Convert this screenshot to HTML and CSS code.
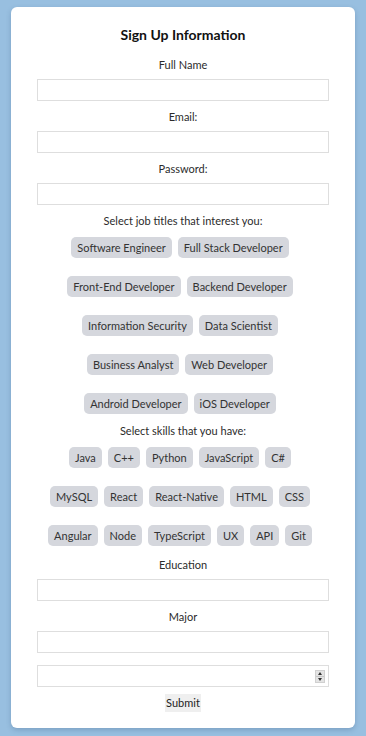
FILE: index.html
```html
<!DOCTYPE html>
<html lang="en">
<head>
    <meta charset="UTF-8">
    <meta name="viewport" content="width=device-width, initial-scale=1.0">
    <title>Sign Up</title>
    <link rel="stylesheet" href="styles.css">
</head>
<body>
    <form class="signup">
        <h1>Sign Up Information</h1>

        <label for="fullName">Full Name</label>
        <input type="text" id="fullName">

        <label for="email">Email:</label>
        <input type="email" id="email">

        <label for="password">Password:</label>
        <input type="password" id="password">

        <p class="group-label">Select job titles that interest you:</p>
        <div class="chips">
            <span class="chip">Software Engineer</span>
            <span class="chip">Full Stack Developer</span>
            <span class="chip">Front-End Developer</span>
            <span class="chip">Backend Developer</span>
            <span class="chip">Information Security</span>
            <span class="chip">Data Scientist</span>
            <span class="chip">Business Analyst</span>
            <span class="chip">Web Developer</span>
            <span class="chip">Android Developer</span>
            <span class="chip">iOS Developer</span>
        </div>

        <p class="group-label">Select skills that you have:</p>
        <div class="chips">
            <span class="chip">Java</span>
            <span class="chip">C++</span>
            <span class="chip">Python</span>
            <span class="chip">JavaScript</span>
            <span class="chip">C#</span>
            <span class="chip">MySQL</span>
            <span class="chip">React</span>
            <span class="chip">React-Native</span>
            <span class="chip">HTML</span>
            <span class="chip">CSS</span>
            <span class="chip">Angular</span>
            <span class="chip">Node</span>
            <span class="chip">TypeScript</span>
            <span class="chip">UX</span>
            <span class="chip">API</span>
            <span class="chip">Git</span>
        </div>

        <label for="education" class="after-chips">Education</label>
        <input type="text" id="education">

        <label for="major">Major</label>
        <input type="text" id="major">

        <div class="number-field">
            <input type="text" id="year">
            <span class="spinner">
                <span class="spin-up"></span>
                <span class="spin-down"></span>
            </span>
        </div>

        <button type="button" class="submit">Submit</button>
    </form>
</body>
</html>
```

FILE: styles.css
```css
* {
    box-sizing: border-box;
}
body {
    margin: 0;
    padding: 7px 11px 9px;
    background: #98bfe0;
    font-family: 'Lato', sans-serif;
    font-size: 11px;
    line-height: 15px;
    color: #2b2b2b;
}
.signup {
    background: white;
    border-radius: 6px;
    box-shadow: 0 2px 5px rgba(40, 70, 110, 0.25);
    padding: 19px 26px 16px;
    text-align: center;
}
h1 {
    font-size: 14px;
    line-height: 17px;
    font-weight: bold;
    color: #111;
    margin: 0 0 14px;
}
label {
    display: block;
    margin: 8px 0 7px;
}
input {
    display: block;
    width: 100%;
    height: 22px;
    margin: 0;
    border: 1px solid #dedede;
    font: inherit;
    padding: 0 4px;
}
.group-label {
    margin: 8px 0 0;
}
.chips + .group-label {
    margin-top: 0;
}
.after-chips {
    margin-top: 2px;
}
.chips {
    display: flex;
    flex-wrap: wrap;
    justify-content: center;
    padding: 0 6px;
}
.chip {
    background: #d5d7dd;
    color: #333;
    border-radius: 5px;
    padding: 3px 6px;
    margin: 9px 6px 9px 0;
    white-space: nowrap;
}
.number-field {
    display: flex;
    align-items: center;
    height: 22px;
    margin-top: 12px;
    border: 1px solid #dedede;
    padding-right: 3px;
}
.number-field input {
    flex: 1;
    border: none;
    height: 20px;
}
.spinner {
    display: flex;
    flex-direction: column;
    width: 10px;
    height: 13px;
    background: #e4e4e4;
    border: 1px solid #d0d0d0;
}
.spin-up, .spin-down {
    flex: 1;
    display: flex;
    align-items: center;
    justify-content: center;
}
.spin-up {
    border-bottom: 1px solid #c8c8c8;
}
.spin-up::before, .spin-down::before {
    content: "";
    border-left: 2.5px solid transparent;
    border-right: 2.5px solid transparent;
}
.spin-up::before {
    border-bottom: 3px solid #333;
}
.spin-down::before {
    border-top: 3px solid #333;
}
.submit {
    display: block;
    margin: 7px auto 0;
    padding: 1px 1px;
    border: none;
    background: #efefef;
    font: inherit;
    color: #222;
    line-height: 16px;
}
```
